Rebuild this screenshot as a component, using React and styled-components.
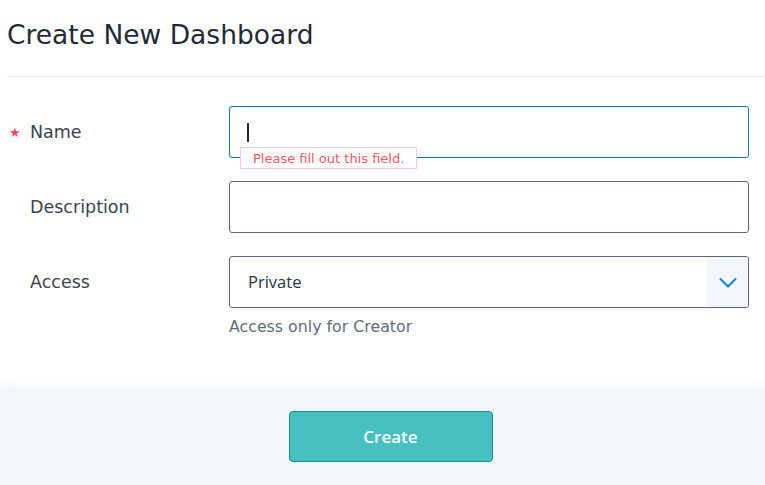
import React from 'react';
import styled, { createGlobalStyle } from 'styled-components';

const GlobalStyle = createGlobalStyle`
  html, body {
    margin: 0;
    padding: 0;
    background: #ffffff;
  }
  body {
    font-family: "DejaVu Sans", "Open Sans", sans-serif;
    color: #2a3440;
  }
`;

const Page = styled.div`
  width: 765px;
  height: 485px;
  display: flex;
  flex-direction: column;
  overflow: hidden;
`;

const Header = styled.div`
  margin: 0 0 0 7px;
  height: 77px;
  border-bottom: 1px solid #e3ecf3;
  display: flex;
  align-items: center;
  padding-bottom: 7px;
  box-sizing: border-box;

  & h1 {
    margin: 0;
    font-size: 26.5px;
    font-weight: 400;
    color: #222b36;
  }
`;

const Form = styled.div`
  flex: 1;
  padding: 29px 16px 0 7px;
  display: flex;
  flex-direction: column;
  gap: 23px;
`;

const Row = styled.div`
  display: grid;
  grid-template-columns: 222px 1fr;
  align-items: start;
`;

const Label = styled.div`
  height: 52px;
  display: flex;
  align-items: center;
  font-size: 17.5px;
  color: #3a4450;
  padding-left: 23px;
  position: relative;

  & .star {
    position: absolute;
    left: 2px;
    color: #f0475f;
    font-size: 13px;
  }
`;

const Field = styled.div`
  position: relative;
  display: flex;
  flex-direction: column;
`;

const InputBox = styled.div`
  height: 52px;
  box-sizing: border-box;
  border: 1px solid ${(p) => (p.$focused ? '#0f74c6' : '#5b6b7c')};
  border-radius: 3px;
  background: #fff;
  display: flex;
  align-items: center;
  padding-left: 17px;
`;

const Caret = styled.span`
  width: 2px;
  height: 19px;
  background: #222b36;
`;

const Tooltip = styled.div`
  position: absolute;
  left: 11px;
  top: 41px;
  height: 22px;
  box-sizing: border-box;
  padding: 0 12px;
  border: 1px solid #fbc7cf;
  background: #fff;
  color: #f0566c;
  font-size: 13px;
  display: flex;
  align-items: center;
  white-space: nowrap;
`;

const Select = styled.div`
  height: 52px;
  box-sizing: border-box;
  border: 1px solid #5b6b7c;
  border-radius: 3px;
  display: flex;
  align-items: stretch;
  overflow: hidden;
`;

const SelectValue = styled.div`
  flex: 1;
  display: flex;
  align-items: center;
  padding-left: 18px;
  padding-bottom: 1px;
  font-family: "Open Sans", sans-serif;
  font-size: 16.5px;
  color: #2a3440;
`;

const SelectArrow = styled.div`
  width: 41px;
  background: #f2f7fb;
  display: flex;
  align-items: center;
  justify-content: center;
`;

const Help = styled.div`
  margin-top: 9px;
  font-size: 15.8px;
  color: #5e6d7c;
`;

const Footer = styled.div`
  height: 97px;
  flex-shrink: 0;
  background: #f4f8fc;
  box-shadow: 0 -4px 8px rgba(0, 0, 0, 0.04);
  display: flex;
  align-items: center;
  justify-content: center;
`;

const Button = styled.button`
  width: 204px;
  height: 51px;
  margin-left: 16px;
  background: #47c1bf;
  border: 1px solid #178c8d;
  border-radius: 4px;
  color: #fff;
  font-family: "Open Sans", sans-serif;
  font-size: 17px;
  font-weight: 600;
  cursor: pointer;
`;

export default function App() {
  return (
    <Page>
      <GlobalStyle />
      <Header>
        <h1>Create New Dashboard</h1>
      </Header>
      <Form>
        <Row>
          <Label>
            <span className="star">★</span>Name
          </Label>
          <Field>
            <InputBox $focused>
              <Caret />
            </InputBox>
            <Tooltip>Please fill out this field.</Tooltip>
          </Field>
        </Row>
        <Row>
          <Label>Description</Label>
          <Field>
            <InputBox />
          </Field>
        </Row>
        <Row>
          <Label>Access</Label>
          <Field>
            <Select>
              <SelectValue>Private</SelectValue>
              <SelectArrow>
                <svg width="18" height="11" viewBox="0 0 18 11" fill="none">
                  <path d="M1 1.5l8 8 8-8" stroke="#1a7fd4" strokeWidth="2" />
                </svg>
              </SelectArrow>
            </Select>
            <Help>Access only for Creator</Help>
          </Field>
        </Row>
      </Form>
      <Footer>
        <Button>Create</Button>
      </Footer>
    </Page>
  );
}
